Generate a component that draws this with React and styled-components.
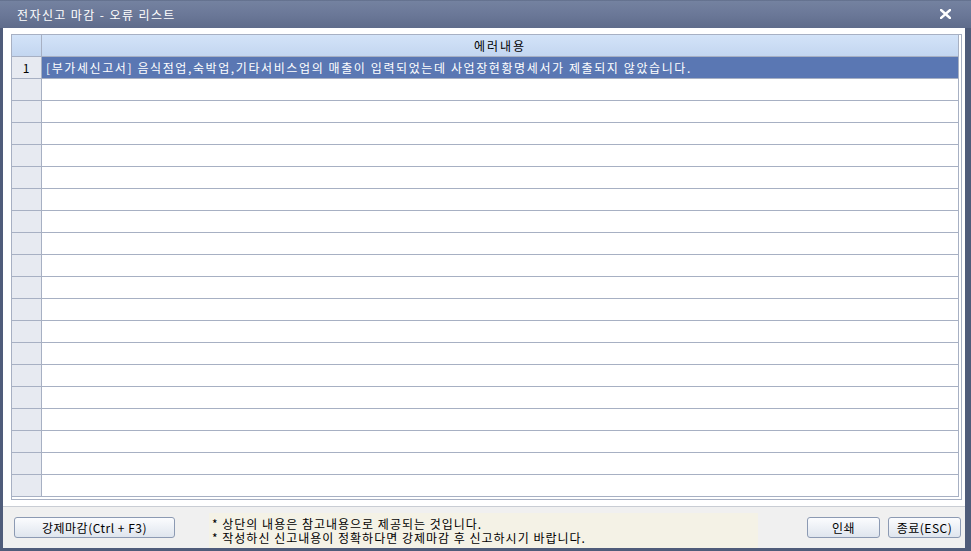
import React from 'react';
import styled, { createGlobalStyle } from 'styled-components';

const GlobalStyle = createGlobalStyle`
  html, body {
    margin: 0;
    padding: 0;
    background: #ffffff;
  }
  body {
    font-family: 'Noto Sans CJK KR', 'Noto Sans', sans-serif;
    font-size: 12px;
    color: #000;
  }
`;

const ROW_COUNT = 20;

const rows = [
  '[부가세신고서] 음식점업,숙박업,기타서비스업의 매출이 입력되었는데 사업장현황명세서가 제출되지 않았습니다.',
];

const App = () => (
  <>
    <GlobalStyle />
    <Window>
      <TitleBar>
        <Title>전자신고 마감 - 오류 리스트</Title>
        <CloseButton aria-label="close">
          <svg width="11" height="10" viewBox="0 0 11 10">
            <path d="M1 1 L10 9 M10 1 L1 9" stroke="#fff" strokeWidth="2.4" strokeLinecap="square" />
          </svg>
        </CloseButton>
      </TitleBar>
      <Body>
        <GridFrame>
          <Table>
            <HeaderRow>
              <NumCell header />
              <TextCell header>에러내용</TextCell>
            </HeaderRow>
            {Array.from({ length: ROW_COUNT }).map((_, i) => (
              <Row key={i}>
                <NumCell>{rows[i] ? i + 1 : ''}</NumCell>
                <TextCell selected={i === 0}>{rows[i] || ''}</TextCell>
              </Row>
            ))}
          </Table>
        </GridFrame>
      </Body>
      <Footer>
        <Button wide>강제마감(Ctrl + F3)</Button>
        <Notice>
          <NoticeLine>* 상단의 내용은 참고내용으로 제공되는 것입니다.</NoticeLine>
          <NoticeLine>* 작성하신 신고내용이 정확하다면 강제마감 후 신고하시기 바랍니다.</NoticeLine>
        </Notice>
        <RightButtons>
          <Button>인쇄</Button>
          <Button>종료(ESC)</Button>
        </RightButtons>
      </Footer>
    </Window>
  </>
);

const Window = styled.div`
  width: 971px;
  height: 551px;
  box-sizing: border-box;
  display: flex;
  flex-direction: column;
  background: #4f5c7a;
  padding: 0 6px 3px 3px;
`;

const TitleBar = styled.div`
  height: 28px;
  flex-shrink: 0;
  margin: 0 -6px 0 -3px;
  padding: 0 16px 0 17px;
  display: flex;
  align-items: center;
  justify-content: space-between;
  background: linear-gradient(#56637f 0, #7482a0 1px, #6b7898 50%, #5f6c8b 100%);
  box-sizing: border-box;
`;

const Title = styled.div`
  color: #ffffff;
  font-size: 12px;
  letter-spacing: 1.4px;
`;

const CloseButton = styled.div`
  display: flex;
  align-items: center;
  margin-right: 4px;
`;

const Body = styled.div`
  flex-shrink: 0;
  background: #ffffff;
  padding: 6px 3px 6px 8px;
  border-bottom: 1px solid #c9cdd4;
`;

const GridFrame = styled.div`
  border: 1px solid #a7b0c3;
  padding: 0 2px 2px 0;
  background: #fff;
`;

const Table = styled.div`
  display: flex;
  flex-direction: column;
  border-right: 1px solid #a7b0c3;
`;

const HeaderRow = styled.div`
  display: flex;
  height: 22px;
  box-sizing: border-box;
  border-bottom: 1px solid #a7b0c3;
  background: linear-gradient(#d3e3f8, #c3d6f0);
`;

const Row = styled.div`
  display: flex;
  height: 22px;
  box-sizing: border-box;
  border-bottom: 1px solid #a7b0c3;
`;

const NumCell = styled.div`
  width: 30px;
  box-sizing: border-box;
  border-right: 1px solid #a7b0c3;
  background: ${(p) => (p.header ? 'transparent' : '#e7eaf1')};
  display: flex;
  align-items: center;
  justify-content: center;
  padding-right: 1px;
`;

const TextCell = styled.div`
  flex: 1;
  display: flex;
  align-items: center;
  justify-content: ${(p) => (p.header ? 'center' : 'flex-start')};
  padding-left: ${(p) => (p.header ? '0' : '4px')};
  background: ${(p) => (p.selected ? '#5a77b3' : 'transparent')};
  color: ${(p) => (p.selected ? '#ffffff' : '#000000')};
  letter-spacing: ${(p) => (p.header ? '2px' : '1.6px')};
  white-space: nowrap;
`;

const Footer = styled.div`
  height: 41px;
  flex-shrink: 0;
  background: #f0f0f0;
  display: flex;
  align-items: flex-start;
  padding: 10px 4px 0 11px;
  box-sizing: border-box;
`;

const Button = styled.div`
  width: ${(p) => (p.wide ? '161px' : '73px')};
  height: 21px;
  box-sizing: border-box;
  border: 1px solid #8c9ab3;
  border-radius: 3px;
  background: linear-gradient(#fbfcfe, #dfe5ee);
  display: flex;
  align-items: center;
  justify-content: center;
  font-size: 12px;
  letter-spacing: 0.5px;
  color: #000;
`;

const Notice = styled.div`
  margin: -4px 0 0 34px;
  width: 549px;
  height: 35px;
  background: #f4f2e6;
  display: flex;
  flex-direction: column;
  justify-content: center;
  padding-left: 3px;
  box-sizing: border-box;
`;

const NoticeLine = styled.div`
  height: 14px;
  line-height: 14px;
  font-size: 12px;
  letter-spacing: 1px;
  white-space: nowrap;
`;

const RightButtons = styled.div`
  margin-left: auto;
  display: flex;
  gap: 8px;
`;

export default App;
